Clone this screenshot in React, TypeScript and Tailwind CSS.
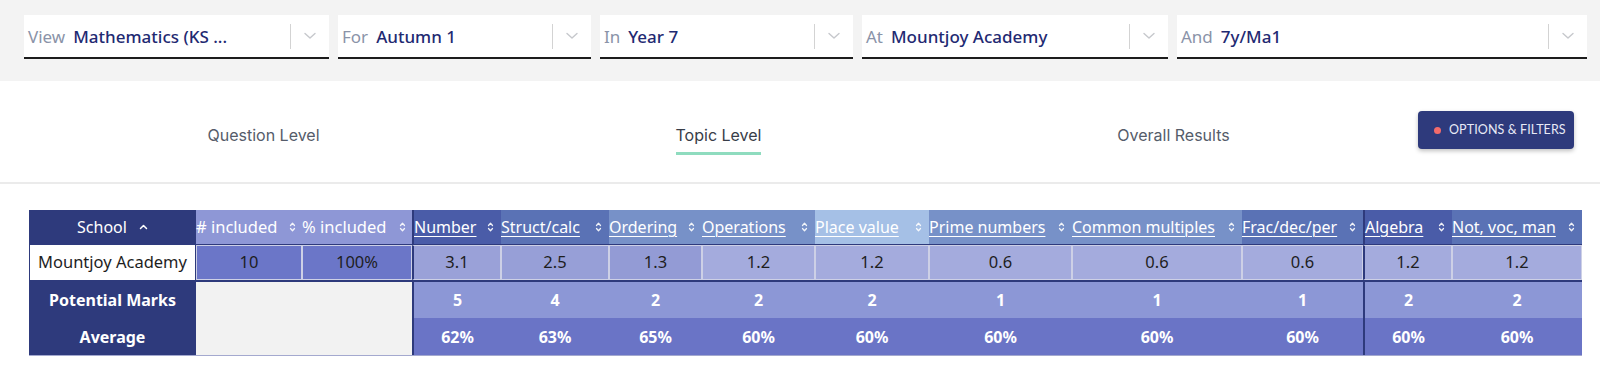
import React from "react";

const NAVY = "bg-[#2e3a7c]";

const selects = [
  { label: "View", value: "Mathematics (KS ...", w: "w-[305px]" },
  { label: "For", value: "Autumn 1", w: "w-[253px]" },
  { label: "In", value: "Year 7", w: "w-[253px]" },
  { label: "At", value: "Mountjoy Academy", w: "w-[306px]" },
  { label: "And", value: "7y/Ma1", w: "w-[410px]" },
];

type Topic = {
  name: string;
  w: string;
  hbg: string;
  v: string;
  vbg: string;
  pm: string;
  avg: string;
  sep?: boolean;
};

const topics: Topic[] = [
  { name: "Number", w: "w-[89px]", hbg: "bg-[#4a5ca8]", v: "3.1", vbg: "bg-[#9aa1d8]", pm: "5", avg: "62%", sep: true },
  { name: "Struct/calc", w: "w-[108px]", hbg: "bg-[#5a72b5]", v: "2.5", vbg: "bg-[#979fd7]", pm: "4", avg: "63%" },
  { name: "Ordering", w: "w-[93px]", hbg: "bg-[#7791c8]", v: "1.3", vbg: "bg-[#939bd5]", pm: "2", avg: "65%" },
  { name: "Operations", w: "w-[113px]", hbg: "bg-[#7791c8]", v: "1.2", vbg: "bg-[#a4abdd]", pm: "2", avg: "60%" },
  { name: "Place value", w: "w-[114px]", hbg: "bg-[#a5c0e6]", v: "1.2", vbg: "bg-[#a4abdd]", pm: "2", avg: "60%" },
  { name: "Prime numbers", w: "w-[143px]", hbg: "bg-[#7791c8]", v: "0.6", vbg: "bg-[#a4abdd]", pm: "1", avg: "60%" },
  { name: "Common multiples", w: "w-[170px]", hbg: "bg-[#7791c8]", v: "0.6", vbg: "bg-[#a4abdd]", pm: "1", avg: "60%" },
  { name: "Frac/dec/per", w: "w-[121px]", hbg: "bg-[#5a72b5]", v: "0.6", vbg: "bg-[#a4abdd]", pm: "1", avg: "60%" },
  { name: "Algebra", w: "w-[89px]", hbg: "bg-[#4a5ca8]", v: "1.2", vbg: "bg-[#a4abdd]", pm: "2", avg: "60%", sep: true },
  { name: "Not, voc, man", w: "w-[130px]", hbg: "bg-[#5a72b5]", v: "1.2", vbg: "bg-[#a4abdd]", pm: "2", avg: "60%" },
];

function SortIcon() {
  return (
    <svg width="7" height="12" viewBox="0 0 7 12" fill="none" stroke="#ffffff" strokeWidth="1.3" strokeLinecap="round" strokeLinejoin="round" className="shrink-0 opacity-90">
      <path d="M1.5 4.5 L3.5 2.3 L5.5 4.5" />
      <path d="M1.5 7.5 L3.5 9.7 L5.5 7.5" />
    </svg>
  );
}

function Chevron() {
  return (
    <svg width="14" height="8" viewBox="0 0 14 8" fill="none" stroke="#c6c8cc" strokeWidth="1.4" strokeLinecap="round" strokeLinejoin="round">
      <path d="M2 1.5 L7 6 L12 1.5" />
    </svg>
  );
}

export default function App() {
  return (
    <div className="w-[1600px] h-[369px] bg-white overflow-hidden font-['Lato',sans-serif]">
      {/* Top filter bar */}
      <div className="h-[81px] bg-[#f3f3f3] pt-[15px] pl-[24px] flex gap-[9px] font-['Noto_Sans',sans-serif]">
        {selects.map((s) => (
          <div key={s.label} className={`${s.w} h-[44px] bg-white border-b-2 border-[#1c1c1c] flex items-center`}>
            <div className="flex-1 flex items-center pl-[4px] gap-[8px] text-[17px] leading-none whitespace-nowrap">
              <span className="text-[#8a93a8]">{s.label}</span>
              <span className="text-[#1f2a72] font-medium">{s.value}</span>
            </div>
            <div className="w-px h-[25px] bg-[#d3d3d3]" />
            <div className="w-[38px] flex items-center justify-center">
              <Chevron />
            </div>
          </div>
        ))}
      </div>

      {/* Tabs */}
      <div className="h-[101px] flex pl-[36px] font-['Inter',sans-serif]">
        <div className="w-[455px] flex justify-center pt-[42px]">
          <span className="text-[16px] leading-[24px] text-[#555c6a]">Question Level</span>
        </div>
        <div className="w-[455px] flex justify-center pt-[42px]">
          <div className="flex flex-col items-stretch">
            <span className="text-[16px] leading-[24px] text-[#383d48]">Topic Level</span>
            <div className="mt-[5px] h-[3px] bg-[#8fdcbf]" />
          </div>
        </div>
        <div className="w-[455px] flex justify-center pt-[42px]">
          <span className="text-[16px] leading-[24px] text-[#555c6a]">Overall Results</span>
        </div>
        <div className="ml-[17px] mt-[30px] w-[156px] h-[38px] rounded-[4px] bg-[#2e3a7c] shadow-[0_2px_4px_rgba(0,0,0,0.25)] flex items-center pl-[16px] gap-[8px] font-['Lato',sans-serif]">
          <span className="w-[7px] h-[7px] rounded-full bg-[#f36b6b]" />
          <span className="text-[12.5px] text-[#e8eaf6] tracking-[0.1px]">OPTIONS &amp; FILTERS</span>
        </div>
      </div>

      <div className="h-[2px] bg-[#ebebeb]" />

      {/* Table */}
      <div className="pt-[26px] pl-[29px] font-['Noto_Sans',sans-serif]">
        <div className="w-[1553px]">
          {/* Header */}
          <div className="flex h-[34px] text-white">
            <div className={`w-[167px] ${NAVY} flex items-center justify-center gap-[12px] text-[16px]`}>
              <span>School</span>
              <svg width="9" height="6" viewBox="0 0 9 6" fill="none" stroke="#ffffff" strokeWidth="1.5" strokeLinecap="round" strokeLinejoin="round">
                <path d="M1.5 4.5 L4.5 1.5 L7.5 4.5" />
              </svg>
            </div>
            <div className="w-[106px] bg-[#8e97d6] flex items-center justify-between pr-[6px] text-[16.5px] whitespace-nowrap">
              <span># included</span>
              <SortIcon />
            </div>
            <div className="w-[110px] bg-[#8e97d6] flex items-center justify-between pr-[6px] text-[16.5px] whitespace-nowrap">
              <span>% included</span>
              <SortIcon />
            </div>
            {topics.map((t) => (
              <div
                key={t.name}
                className={`${t.w} ${t.hbg} ${t.sep ? "border-l-2 border-[#2e3a7c]" : ""} flex items-center justify-between pr-[7px] text-[16px]`}
              >
                <span className="underline underline-offset-[3px] decoration-1 whitespace-nowrap">{t.name}</span>
                <SortIcon />
              </div>
            ))}
          </div>

          {/* Row 2 */}
          <div className="flex h-[38px] border-t border-b-2 border-[#2e3a7c] text-[16.5px] text-[#1e1e1e]">
            <div className="w-[167px] bg-white border-x border-[#2e3a7c] flex items-center justify-center whitespace-nowrap">
              Mountjoy Academy
            </div>
            <div className="w-[106px] bg-[#6b76c8] border border-[#cdd0e6] flex items-center justify-center">10</div>
            <div className="w-[110px] bg-[#6b76c8] border border-[#cdd0e6] flex items-center justify-center">100%</div>
            {topics.map((t) => (
              <div
                key={t.name}
                className={`${t.w} ${t.vbg} border border-[#cdd0e6] ${t.sep ? "border-l-2 border-l-[#2e3a7c]" : ""} flex items-center justify-center`}
              >
                {t.v}
              </div>
            ))}
          </div>

          {/* Potential Marks */}
          <div className="flex h-[36px] text-[16px] font-bold text-white">
            <div className={`w-[167px] ${NAVY} flex items-center justify-center`}>Potential Marks</div>
            <div className="w-[216px] bg-[#f2f2f2]" />
            {topics.map((t) => (
              <div
                key={t.name}
                className={`${t.w} bg-[#8c97d6] ${t.sep ? "border-l-2 border-[#2e3a7c]" : ""} flex items-center justify-center`}
              >
                {t.pm}
              </div>
            ))}
          </div>

          {/* Average */}
          <div className="flex h-[38px] text-[16px] font-bold text-white border-b border-[#a4a9cf]">
            <div className={`w-[167px] ${NAVY} flex items-center justify-center`}>Average</div>
            <div className="w-[216px] bg-[#f2f2f2]" />
            {topics.map((t) => (
              <div
                key={t.name}
                className={`${t.w} bg-[#6a74c6] ${t.sep ? "border-l-2 border-[#2e3a7c]" : ""} flex items-center justify-center`}
              >
                {t.avg}
              </div>
            ))}
          </div>
        </div>
      </div>
    </div>
  );
}
